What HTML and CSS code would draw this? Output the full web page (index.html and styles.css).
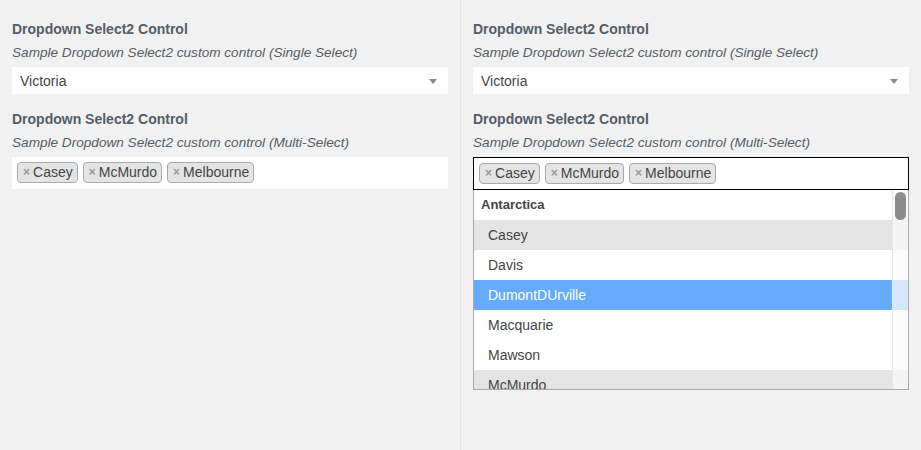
FILE: index.html
```html
<!DOCTYPE html>
<html>
<head>
<meta charset="utf-8">
<link rel="stylesheet" href="styles.css">
</head>
<body>
<div class="page">
  <div class="panel">
    <div class="control">
      <div class="title">Dropdown Select2 Control</div>
      <div class="desc">Sample Dropdown Select2 custom control (Single Select)</div>
      <div class="single"><span class="value">Victoria</span><span class="arrow"></span></div>
    </div>
    <div class="control second">
      <div class="title">Dropdown Select2 Control</div>
      <div class="desc">Sample Dropdown Select2 custom control (Multi-Select)</div>
      <div class="multi">
        <span class="tag"><span class="x">×</span>Casey</span>
        <span class="tag"><span class="x">×</span>McMurdo</span>
        <span class="tag"><span class="x">×</span>Melbourne</span>
      </div>
    </div>
  </div>
  <div class="divider"></div>
  <div class="panel">
    <div class="control">
      <div class="title">Dropdown Select2 Control</div>
      <div class="desc">Sample Dropdown Select2 custom control (Single Select)</div>
      <div class="single"><span class="value">Victoria</span><span class="arrow"></span></div>
    </div>
    <div class="control second">
      <div class="title">Dropdown Select2 Control</div>
      <div class="desc">Sample Dropdown Select2 custom control (Multi-Select)</div>
      <div class="multi open">
        <span class="tag"><span class="x">×</span>Casey</span>
        <span class="tag"><span class="x">×</span>McMurdo</span>
        <span class="tag"><span class="x">×</span>Melbourne</span>
      </div>
      <div class="dropdown">
        <div class="list">
          <div class="group">Antarctica</div>
          <div class="opt selected">Casey</div>
          <div class="opt">Davis</div>
          <div class="opt hl">DumontDUrville</div>
          <div class="opt">Macquarie</div>
          <div class="opt">Mawson</div>
          <div class="opt selected">McMurdo</div>
        </div>
        <div class="track"><div class="thumb"></div></div>
      </div>
    </div>
  </div>
</div>
</body>
</html>
```

FILE: styles.css
```css
html, body {
  margin: 0;
  padding: 0;
  background: #f1f1f1;
  height: 100%;
}
body {
  font-family: "Liberation Sans", Arial, sans-serif;
  color: #555d66;
  overflow: hidden;
}
.page {
  display: flex;
  height: 450px;
}
.panel {
  width: 460px;
  padding: 19px 12px 0 12px;
  box-sizing: border-box;
}
.divider {
  width: 1px;
  background: #e2e2e2;
}
.control.second {
  margin-top: 15px;
}
.title {
  font-size: 14px;
  font-weight: bold;
  line-height: 20px;
  color: #555d66;
}
.desc {
  font-size: 13.6px;
  font-style: italic;
  line-height: 18px;
  margin-top: 5px;
  margin-bottom: 5px;
  color: #555d66;
}
.single {
  height: 27px;
  background: #fff;
  display: flex;
  align-items: center;
  justify-content: space-between;
  padding: 0 8px;
  box-sizing: border-box;
}
.value {
  font-size: 14px;
  color: #444;
}
.arrow {
  width: 0;
  height: 0;
  border-left: 4px solid transparent;
  border-right: 4px solid transparent;
  border-top: 5px solid #888;
  margin-right: 3px;
  margin-top: 1px;
}
.multi {
  height: 32px;
  background: #fff;
  display: flex;
  align-items: flex-start;
  gap: 5px;
  padding: 5px 5px;
  box-sizing: border-box;
}
.multi.open {
  border: 1px solid #000;
  height: 33px;
  padding: 5px 5px 0 5px;
}
.tag {
  height: 21px;
  box-sizing: border-box;
  background: #e4e4e4;
  border: 1px solid #aaa;
  border-radius: 4px;
  padding: 0 4px 0 5px;
  font-size: 14px;
  line-height: 19px;
  color: #444;
  display: inline-flex;
  align-items: center;
}
.x {
  color: #999;
  font-weight: bold;
  font-size: 12px;
  margin-right: 3px;
}
.dropdown {
  position: relative;
  height: 200px;
  background: #fff;
  border: 1px solid #aaa;
  border-top: none;
  box-sizing: border-box;
  overflow: hidden;
}
.list {
  display: flex;
  flex-direction: column;
}
.group {
  height: 30px;
  line-height: 30px;
  padding-left: 7px;
  font-size: 13px;
  font-weight: bold;
  color: #444;
  flex-shrink: 0;
}
.opt {
  height: 30px;
  line-height: 30px;
  padding-left: 14px;
  font-size: 14px;
  color: #444;
  flex-shrink: 0;
}
.opt.selected {
  background: #e4e4e4;
}
.opt.hl {
  background: #66aafb;
  color: #fff;
}
.track {
  position: absolute;
  top: 0;
  right: 0;
  bottom: 0;
  width: 15px;
  background: rgba(250, 250, 250, 0.75);
  border-left: 1px solid #e6e6e6;
}
.thumb {
  position: absolute;
  top: 2px;
  left: 2px;
  width: 11px;
  height: 28px;
  border-radius: 6px;
  background: #8c8c8c;
}
```
